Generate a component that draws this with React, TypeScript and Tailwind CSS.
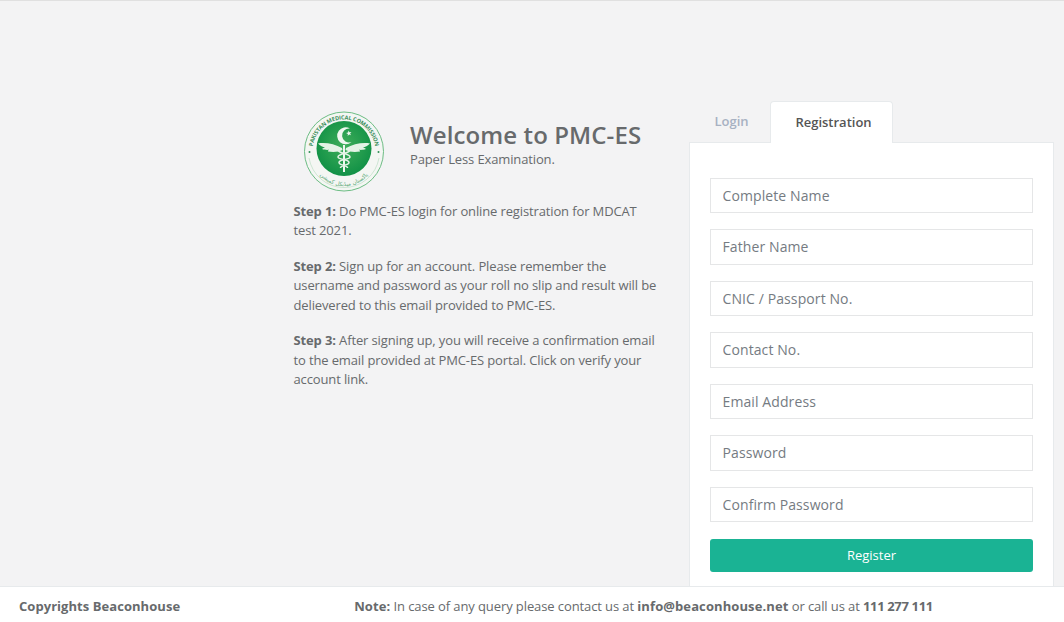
import React from "react";

const fields = ["Complete Name", "Father Name", "CNIC / Passport No.", "Contact No.", "Email Address", "Password", "Confirm Password"];

function Logo() {
  return (
    <svg width="82" height="82" viewBox="0 0 82 82" className="shrink-0">
      <defs>
        <path id="arcTop" d="M14.2 57.500 A31.5 31.5 0 1 1 67.8 57.500" />
        <path id="arcBot" d="M9 44 A32 32 0 0 0 73 44" />
        <radialGradient id="g" cx="50%" cy="45%" r="55%">
          <stop offset="0%" stopColor="#3fae5a" />
          <stop offset="100%" stopColor="#119146" />
        </radialGradient>
      </defs>
      <circle cx="41" cy="41.500" r="39.500" fill="#f4f6f3" stroke="#6dbd84" strokeWidth="1" />
      <path d="M6 48A35.500 35.500 0 0 0 76 48" fill="none" stroke="#a6d5b3" strokeWidth="0.5" />
      <text fontSize="5.600" fontWeight="700" fill="#3c8f5c" fontFamily="'Open Sans', sans-serif">
        <textPath href="#arcTop" startOffset="50%" textAnchor="middle">PAKISTAN MEDICAL COMMISSION</textPath>
      </text>
      <text fontSize="5.500" fill="#5aa977" fontFamily="'DejaVu Sans', sans-serif">
        <textPath href="#arcBot" startOffset="50%" textAnchor="middle">پاکستان میڈیکل کمیشن</textPath>
      </text>
      <circle cx="6.500" cy="42" r="1" fill="#2f8f55" />
      <circle cx="75.500" cy="42" r="1" fill="#2f8f55" />
      <circle cx="41" cy="38.500" r="27.500" fill="url(#g)" />
      <path d="M47 18.500 A8.500 8.500 0 1 0 48.500 32 A7 7 0 1 1 47 18.500Z" fill="#eef7ef" />
      <path d="M45.500 20.500l1 1.800 2-.3-1.400 1.500.9 1.800-1.900-.8-1.400 1.400.2-2-1.800-.9 2-.5z" fill="#eef7ef" />
      <path d="M39 38C32 34 22 32 15 33.500C17 36 20 37 22 37.500C20 38 19.500 38.500 19 39C22 40 24 40 26 39.800C25 40.500 25 41 25 41.500C30 42.500 36 42 39.500 40Z" fill="#e4f3e6" />
      <path d="M43 38C50 34 60 32 67 33.500C65 36 62 37 60 37.500C62 38 62.500 38.500 63 39C60 40 58 40 56 39.800C57 40.500 57 41 57 41.500C52 42.500 46 42 42.500 40Z" fill="#e4f3e6" />
      <path d="M41 35V62" stroke="#eef7ef" strokeWidth="2" />
      <path d="M35 40C36 44 47 43 47 47C47 50 36 49 36 52.500C36 55.500 45 55 44.500 58M47 40C46 44 35 43 35 47C35 50 46 49 46 52.500C46 55.500 37 55 37.500 58" stroke="#e4f3e6" strokeWidth="1.500" fill="none" />
    </svg>
  );
}

export default function App() {
  return (
    <div className="h-[622px] w-full flex flex-col overflow-hidden bg-[#f3f3f4] text-[13px] leading-[19.5px] tracking-[-0.13px] text-[#676a6c] font-['Open_Sans',sans-serif] border-t border-[#e0e0e0]">
      <main className="flex-1 min-h-0 overflow-hidden flex pl-[293px] pt-[100px]">
        <section className="w-[396px] shrink-0 pl-[0.5px] pr-[28px]">
          <div className="flex items-start pl-[9.500px] pt-[9px]">
            <Logo />
            <div className="ml-[25px] pt-[12px]">
              <h2 className="text-[24px] leading-[26.400px] font-semibold tracking-[0.1px]">Welcome to PMC-ES</h2>
              <p className="leading-[19.500px] mt-[2px]">Paper Less Examination.</p>
            </div>
          </div>
          <p className="mt-[9.500px]"><b>Step 1:</b> Do PMC-ES login for online registration for MDCAT test 2021.</p>
          <p className="mt-[16px]"><b>Step 2:</b> Sign up for an account. Please remember the username and password as your roll no slip and result will be delievered to this email provided to PMC-ES.</p>
          <p className="mt-[16px]"><b>Step 3:</b> After signing up, you will receive a confirmation email to the email provided at PMC-ES portal. Click on verify your account link.</p>
        </section>
        <section className="w-[365px] shrink-0">
          <div className="flex h-[41px] relative z-10">
            <button className="w-[81px] h-[41px] pl-[4px] font-semibold tracking-[0px] text-[#a7b1c2]">Login</button>
            <button className="w-[123px] h-[42px] pl-[4px] font-semibold tracking-[0px] text-[#555555] bg-white border border-b-0 border-[#e7eaec] rounded-t-[4px]">Registration</button>
          </div>
          <div className="bg-white border border-[#e7eaec] w-[365px] px-[20px] pt-[34.750px] pb-[20px]">
            <form className="flex flex-col">
              {fields.map((f) => (
                <input
                  key={f}
                  readOnly
                  placeholder={f}
                  className="w-[323px] h-[35.500px] mb-[16px] border border-[#e5e6e7] bg-white pl-[11.500px] pr-[12px] pb-[0.5px] text-[14px] tracking-[0.1px] outline-none placeholder:text-[#757b82]"
                />
              ))}
              <button type="button" className="w-[323px] h-[33px] mt-[0.500px] rounded-[3px] bg-[#1ab394] text-white text-[13px] tracking-[0px]">Register</button>
            </form>
          </div>
        </section>
      </main>
      <footer className="h-[36px] shrink-0 bg-white border-t border-[#e7eaec] flex items-center px-[19px] pt-[4px] tracking-[-0.1px]">
        <b className="font-bold tracking-[0.05px]">Copyrights Beaconhouse</b>
        <p className="ml-[174px]"><b className="tracking-[0.1px]">Note:</b> In case of any query please contact us at <b className="tracking-[0.1px]">info@beaconhouse.net</b> or call us at <b className="tracking-[-0.35px]">111 277 111</b></p>
      </footer>
    </div>
  );
}
